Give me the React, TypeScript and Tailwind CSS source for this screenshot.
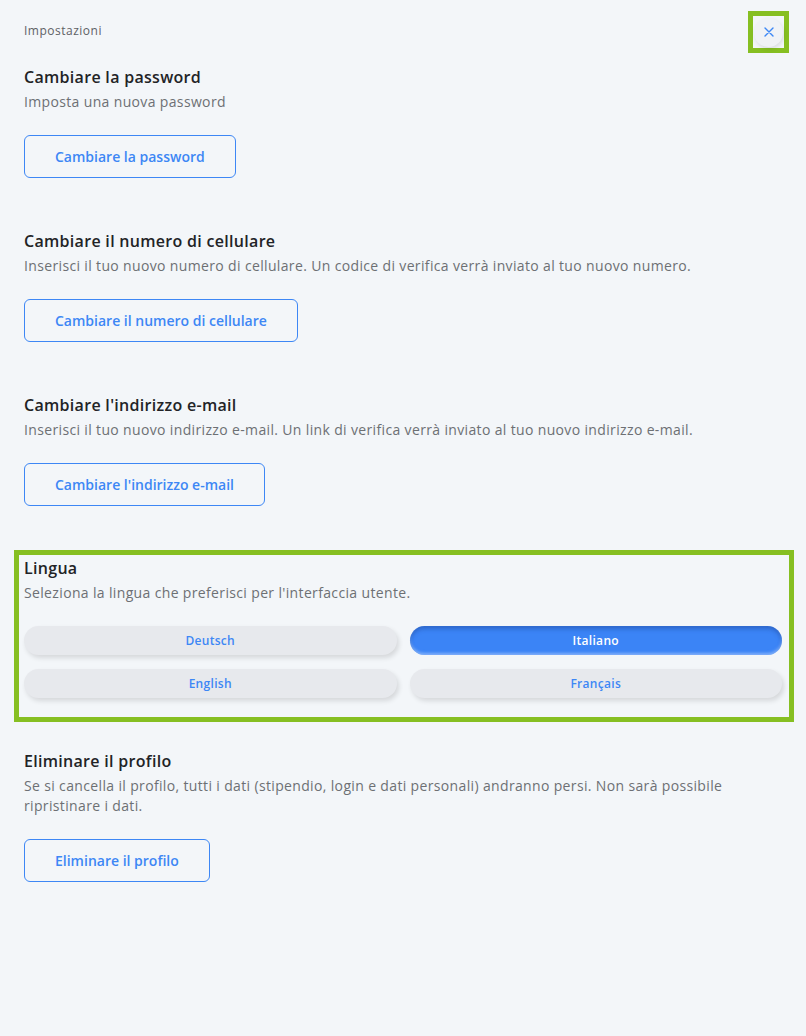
import React, { useState } from 'react';

const font = { fontFamily: '"Open Sans", "Liberation Sans", sans-serif' };

const Section: React.FC<{ title: string; description: string; children: React.ReactNode }> = ({ title, description, children }) => (
    <div className="flex flex-col">
        <h3 className="text-base leading-6 font-semibold tracking-[0.3px] text-[#222326]">{title}</h3>
        <p className="mt-[3px] text-sm leading-5 font-medium tracking-[0.35px] text-[#6d7074]">{description}</p>
        <div className="mt-[23px]">{children}</div>
    </div>
);

const OutlineButton: React.FC<{ label: string }> = ({ label }) => (
    <button className="h-[43px] px-[30px] rounded-md border border-[#3d87f5] text-sm font-semibold text-[#3d87f5] bg-transparent">
        {label}
    </button>
);

const languages = ['Deutsch', 'Italiano', 'English', 'Français'];

export default function App() {
    const [lang, setLang] = useState('Italiano');

    return (
        <div className="min-h-[1036px] w-full bg-[#f3f6f9] px-6" style={font}>
            <div className="flex items-start justify-between pt-[11px] -mr-[7px]">
                <span className="mt-[12px] text-xs leading-4 font-medium tracking-[0.5px] text-[#5e6165]">Impostazioni</span>
                <div className="w-[41px] h-[42px] border-[5px] border-[#86bf22] flex items-center justify-center">
                    <button className="w-[29px] h-[29px] rounded-full bg-[#f0f2f6] shadow-[1px_2px_4px_rgba(0,0,0,0.1)] flex items-center justify-center">
                        <svg width="10" height="10" viewBox="0 0 10 10" fill="none" stroke="#3d87f5" strokeWidth="1.4" strokeLinecap="round">
                            <path d="M1 1L9 9M9 1L1 9" />
                        </svg>
                    </button>
                </div>
            </div>

            <div className="mt-[12px] flex flex-col">
                <Section title="Cambiare la password" description="Imposta una nuova password">
                    <OutlineButton label="Cambiare la password" />
                </Section>

                <div className="mt-[51px]">
                    <Section
                        title="Cambiare il numero di cellulare"
                        description="Inserisci il tuo nuovo numero di cellulare. Un codice di verifica verrà inviato al tuo nuovo numero."
                    >
                        <OutlineButton label="Cambiare il numero di cellulare" />
                    </Section>
                </div>

                <div className="mt-[51px]">
                    <Section
                        title="Cambiare l'indirizzo e-mail"
                        description="Inserisci il tuo nuovo indirizzo e-mail. Un link di verifica verrà inviato al tuo nuovo indirizzo e-mail."
                    >
                        <OutlineButton label="Cambiare l'indirizzo e-mail" />
                    </Section>
                </div>

                <div className="mt-[44px] -ml-[10px] -mr-[12px] border-[5px] border-[#86bf22] pl-[5px] pr-[7px] pt-[1px] pb-[19px]">
                    <Section title="Lingua" description="Seleziona la lingua che preferisci per l'interfaccia utente.">
                        <div className="grid grid-cols-2 gap-x-[13px] gap-y-[14px]">
                            {languages.map((l) =>
                                l === lang ? (
                                    <button
                                        key={l}
                                        onClick={() => setLang(l)}
                                        className="h-[29px] rounded-full bg-[#3b84f6] text-xs font-semibold tracking-[0.3px] text-white shadow-[inset_0_3px_4px_rgba(20,50,120,0.35),inset_0_-2px_3px_rgba(180,210,255,0.6)]"
                                    >
                                        {l}
                                    </button>
                                ) : (
                                    <button
                                        key={l}
                                        onClick={() => setLang(l)}
                                        className="h-[29px] rounded-full bg-[#e7e9ed] text-xs font-semibold tracking-[0.3px] text-[#3d87f5] shadow-[2px_3px_5px_rgba(0,0,0,0.12)]"
                                    >
                                        {l}
                                    </button>
                                )
                            )}
                        </div>
                    </Section>
                </div>

                <div className="mt-[27px]">
                    <Section
                        title="Eliminare il profilo"
                        description="Se si cancella il profilo, tutti i dati (stipendio, login e dati personali) andranno persi. Non sarà possibile ripristinare i dati."
                    >
                        <OutlineButton label="Eliminare il profilo" />
                    </Section>
                </div>
            </div>
        </div>
    );
}
